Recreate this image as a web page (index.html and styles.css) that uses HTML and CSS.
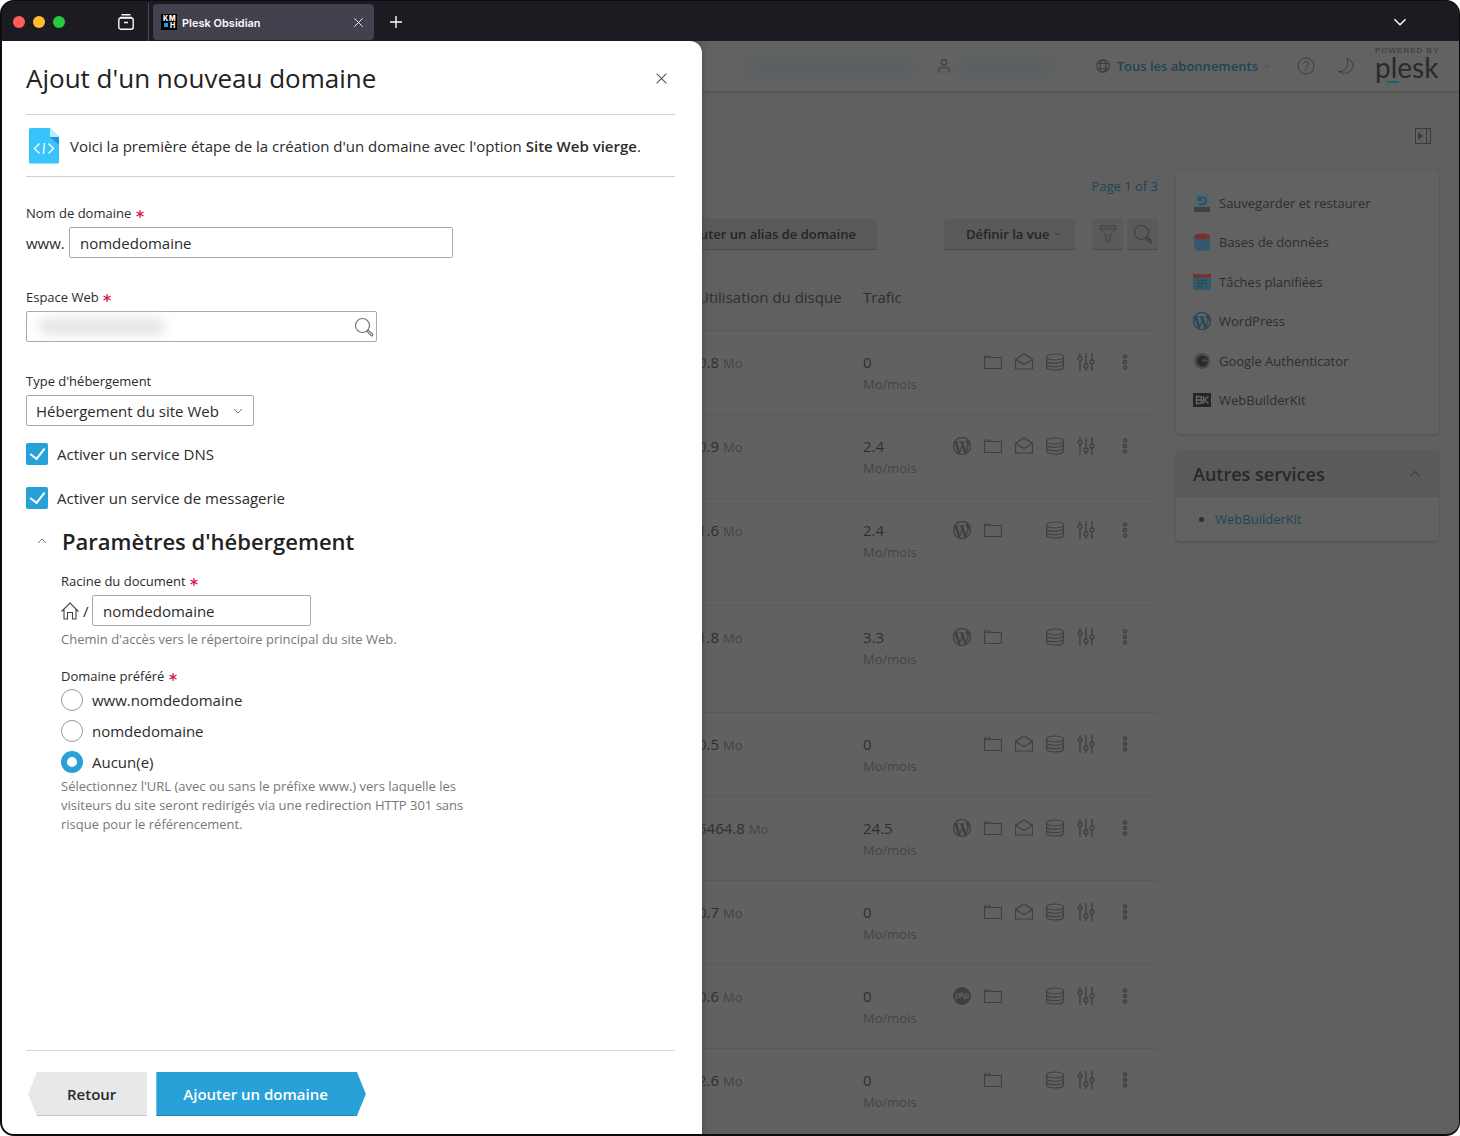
FILE: index.html
```html
<!DOCTYPE html>
<html lang="fr">
<head>
<meta charset="utf-8">
<meta name="viewport" content="width=device-width, initial-scale=1">
<title>Plesk Obsidian</title>
<link rel="stylesheet" href="styles.css">
</head>
<body>
<svg class="sprite" aria-hidden="true">
  <symbol id="i-req" viewBox="0 0 8 8"><path d="M4 0v8M.5 2l7 4M7.500 2l-7 4" stroke="currentColor" stroke-width="1.200" fill="none"/></symbol>
  <symbol id="i-x" viewBox="0 0 12 12"><path d="M1.500 1.500l9 9M10.500 1.500l-9 9" stroke="currentColor" fill="none"/></symbol>
  <symbol id="i-down" viewBox="0 0 10 10"><path d="M1 3l4 4 4-4" stroke="currentColor" fill="none"/></symbol>
  <symbol id="i-up" viewBox="0 0 10 10"><path d="M1 7l4-4 4 4" stroke="currentColor" fill="none"/></symbol>
  <symbol id="i-search" viewBox="0 0 20 20"><circle cx="8.500" cy="8.500" r="7" stroke="currentColor" stroke-width="1.200" fill="none"/><path d="M13 14.200l1.200-1.200 4.300 4c1 1-.6 2.400-1.500 1.500z" stroke="currentColor" stroke-width="1.200" fill="none"/></symbol>
  <symbol id="i-folder" viewBox="0 0 18 18"><path d="M.5 15.500v-12.500h5l1.500 1.500h10.500v11zM.5 4.500H7" stroke="currentColor" stroke-width="1.200" fill="none"/></symbol>
  <symbol id="i-mail" viewBox="0 0 18 18"><path d="M.5 6.500L9 .8l8.500 5.700v9.500H.5zM.5 6.500L9 11.500l8.500-5" stroke="currentColor" stroke-width="1.200" fill="none"/></symbol>
  <symbol id="i-db" viewBox="0 0 18 18"><path d="M.5 4c0-4 17-4 17 0v10c0 4-17 4-17 0zM.5 4c0 4 17 4 17 0M.5 7.300c0 4 17 4 17 0M.5 10.700c0 4 17 4 17 0" stroke="currentColor" stroke-width="1.200" fill="none"/></symbol>
  <symbol id="i-sliders" viewBox="0 0 18 18"><path d="M3 0v3.500M3 7.500V18M9 0v11M9 15v3M15 0v7M15 11v7" stroke="currentColor" stroke-width="1.400" fill="none"/><g stroke="currentColor" stroke-width="1.300" fill="none"><circle cx="3" cy="5.500" r="2"/><circle cx="9" cy="13" r="2"/><circle cx="15" cy="9" r="2"/></g></symbol>
  <symbol id="i-dots" viewBox="0 0 6 18"><g stroke="currentColor" stroke-width="1.500" fill="none"><circle cx="3" cy="3.500" r="1.600"/><circle cx="3" cy="9" r="1.600"/><circle cx="3" cy="14.500" r="1.600"/></g></symbol>
  <symbol id="i-wp" viewBox="0 0 24 24"><path fill="currentColor" stroke="currentColor" stroke-width=".6" d="M21.469 6.825c.84 1.537 1.318 3.3 1.318 5.175 0 3.979-2.156 7.456-5.363 9.325l3.295-9.527c.615-1.54.82-2.771.82-3.864 0-.405-.026-.78-.07-1.11m-7.981.105c.647-.03 1.232-.105 1.232-.105.582-.075.514-.93-.067-.899 0 0-1.755.135-2.88.135-1.064 0-2.85-.15-2.85-.15-.585-.03-.661.855-.075.885 0 0 .54.061 1.125.09l1.68 4.605-2.37 7.08L5.354 6.9c.649-.03 1.234-.1 1.234-.1.585-.075.516-.93-.065-.896 0 0-1.746.138-2.874.138-.2 0-.438-.008-.69-.015C4.911 3.15 8.235 1.215 12 1.215c2.809 0 5.365 1.072 7.286 2.833-.046-.003-.091-.009-.141-.009-1.06 0-1.812.923-1.812 1.914 0 .89.513 1.643 1.06 2.531.411.72.89 1.643.89 2.977 0 .915-.354 1.994-.821 3.479l-1.075 3.585-3.9-11.61.001.014zM12 22.784c-1.059 0-2.081-.153-3.048-.437l3.237-9.406 3.315 9.087c.024.053.05.101.078.149-1.12.393-2.325.609-3.582.609M1.211 12c0-1.564.336-3.05.935-4.39L7.29 21.709C3.694 19.96 1.212 16.271 1.211 12M12 0C5.385 0 0 5.385 0 12s5.385 12 12 12 12-5.385 12-12S18.615 0 12 0"/></symbol>
  <symbol id="i-php" viewBox="0 0 18 18"><circle cx="9" cy="9" r="9" fill="currentColor"/><path d="M2.500 12.500l1-5.500h1.800c2 0 1.500 3.500-.6 3.500H3M7.500 10.500l1-5.500M8.200 7.500c2-.8 2.700-.3 2.300 1l-.4 2M11.700 12.500l1-5.500h1.600c2 0 1.500 3.500-.6 3.500h-1.500" stroke="#616161" stroke-width="1.200" fill="none"/></symbol>
</svg>

<div class="window">
  <div class="titlebar">
    <div class="lights"><span class="light red"></span><span class="light amber"></span><span class="light green"></span></div>
    <button class="bar-btn archive" aria-label="Archives"><svg width="16" height="16" viewBox="0 0 16 16" fill="none" stroke="currentColor" stroke-width="1.400"><path d="M3.500.8h9"/><rect x=".8" y="4" width="14.400" height="11.200" rx="2"/><path d="M2 3.500h12M6 8.500h4"/></svg></button>
    <div class="tab">
      <svg class="favicon" width="16" height="16" viewBox="0 0 16 16"><rect width="16" height="16" fill="#000"/><rect x="3" y="9" width="4" height="4" fill="#0aa5ec"/><text x="2" y="7" class="fav-text">K</text><text x="8" y="7" class="fav-text">M</text><text x="9" y="14" class="fav-text">H</text></svg>
      <span class="tab-title">Plesk Obsidian</span>
      <button class="bar-btn" aria-label="Fermer l'onglet"><svg width="11" height="11"><use href="#i-x"/></svg></button>
    </div>
    <button class="bar-btn plus" aria-label="Nouvel onglet"><svg width="12" height="12" viewBox="0 0 12 12" stroke="currentColor" stroke-width="1.400"><path d="M6 0v12M0 6h12"/></svg></button>
    <button class="bar-btn tabs-list" aria-label="Onglets"><svg width="14" height="14" viewBox="0 0 10 10"><use href="#i-down"/></svg></button>
  </div>

  <div class="viewport">
    <div class="page">
      <header class="topbar">
        <span class="smudge smudge-wide"></span>
        <svg class="user" width="12" height="14" viewBox="0 0 12 14" fill="none" stroke="currentColor" stroke-width="1.200"><circle cx="6" cy="3.500" r="2.800"/><path d="M1 14v-3.500c0-3 10-3 10 0V14"/></svg>
        <span class="smudge smudge-short"></span>
        <svg class="globe" width="14" height="14" viewBox="0 0 14 14" fill="none" stroke="currentColor" stroke-width="1.200"><circle cx="7" cy="7" r="6.200"/><ellipse cx="7" cy="7" rx="3" ry="6.200"/><path d="M1.500 4.500h11M1.500 9.500h11"/></svg>
        <a class="subs" href="#">Tous les abonnements</a>
        <svg class="caret" width="6" height="6" viewBox="0 0 10 10"><use href="#i-down"/></svg>
        <svg class="help" width="18" height="18" viewBox="0 0 18 18" fill="none" stroke="currentColor"><circle cx="9" cy="9" r="8"/><path d="M6.500 7c0-3.300 5-3.300 5-.3 0 1.800-2.500 1.800-2.500 4M9 12.300v1.400"/></svg>
        <svg class="moon" width="18" height="18" viewBox="0 0 18 18" fill="none" stroke="currentColor"><path d="M10 1.500c6 2 8 8 3.500 12.500-3.500 3-8.500 3-12 .5 6 1 11-5 8.500-13z"/></svg>
        <a class="logo" href="#"><span class="powered">POWERED BY</span><span class="plesk">plesk</span></a>
      </header>

      <div class="pagebar"><button class="icon-btn" aria-label="Masquer le panneau"><svg width="16" height="16" viewBox="0 0 16 16" fill="none" stroke="currentColor"><rect x=".5" y=".5" width="15" height="15"/><path d="M11.500.5v15"/><path d="M3.500 5v6l4-3z" fill="currentColor"/></svg></button></div>

      <div class="columns">
        <main class="main">
          <a class="pager" href="#">Page 1 of 3</a>
          <div class="toolbar">
            <button class="tool alias">Ajouter un alias de domaine</button>
            <button class="tool view">Définir la vue <svg width="6" height="6" viewBox="0 0 10 10"><use href="#i-down"/></svg></button>
            <button class="tool square filter" aria-label="Filtrer"><svg width="18" height="18" viewBox="0 0 18 18" fill="none" stroke="currentColor"><path d="M1 1h16v3l-6 6v6l-4 1.500V10L1 4zM1 4h16"/></svg></button>
            <button class="tool square" aria-label="Rechercher"><svg width="20" height="20"><use href="#i-search"/></svg></button>
          </div>
          <table class="domains">
            <colgroup><col><col class="c-disk"><col class="c-traffic"><col class="c-acts"></colgroup>
            <thead><tr><td></td><th scope="col">Utilisation du disque</th><th scope="col">Trafic</th><td></td></tr></thead>
            <tbody>
              <tr><td></td><td>0.8 <small>Mo</small></td><td>0<small class="unit">Mo/mois</small></td><td><div class="acts"><i></i><svg><use href="#i-folder"/></svg><svg><use href="#i-mail"/></svg><svg><use href="#i-db"/></svg><svg><use href="#i-sliders"/></svg><svg class="dots"><use href="#i-dots"/></svg></div></td></tr>
              <tr><td></td><td>0.9 <small>Mo</small></td><td>2.4<small class="unit">Mo/mois</small></td><td><div class="acts"><svg><use href="#i-wp"/></svg><svg><use href="#i-folder"/></svg><svg><use href="#i-mail"/></svg><svg><use href="#i-db"/></svg><svg><use href="#i-sliders"/></svg><svg class="dots"><use href="#i-dots"/></svg></div></td></tr>
              <tr class="tall"><td></td><td>1.6 <small>Mo</small></td><td>2.4<small class="unit">Mo/mois</small></td><td><div class="acts"><svg><use href="#i-wp"/></svg><svg><use href="#i-folder"/></svg><i></i><svg><use href="#i-db"/></svg><svg><use href="#i-sliders"/></svg><svg class="dots"><use href="#i-dots"/></svg></div></td></tr>
              <tr class="tall"><td></td><td>1.8 <small>Mo</small></td><td>3.3<small class="unit">Mo/mois</small></td><td><div class="acts"><svg><use href="#i-wp"/></svg><svg><use href="#i-folder"/></svg><i></i><svg><use href="#i-db"/></svg><svg><use href="#i-sliders"/></svg><svg class="dots"><use href="#i-dots"/></svg></div></td></tr>
              <tr><td></td><td>0.5 <small>Mo</small></td><td>0<small class="unit">Mo/mois</small></td><td><div class="acts"><i></i><svg><use href="#i-folder"/></svg><svg><use href="#i-mail"/></svg><svg><use href="#i-db"/></svg><svg><use href="#i-sliders"/></svg><svg class="dots"><use href="#i-dots"/></svg></div></td></tr>
              <tr><td></td><td>5464.8 <small>Mo</small></td><td>24.5<small class="unit">Mo/mois</small></td><td><div class="acts"><svg><use href="#i-wp"/></svg><svg><use href="#i-folder"/></svg><svg><use href="#i-mail"/></svg><svg><use href="#i-db"/></svg><svg><use href="#i-sliders"/></svg><svg class="dots"><use href="#i-dots"/></svg></div></td></tr>
              <tr><td></td><td>0.7 <small>Mo</small></td><td>0<small class="unit">Mo/mois</small></td><td><div class="acts"><i></i><svg><use href="#i-folder"/></svg><svg><use href="#i-mail"/></svg><svg><use href="#i-db"/></svg><svg><use href="#i-sliders"/></svg><svg class="dots"><use href="#i-dots"/></svg></div></td></tr>
              <tr><td></td><td>0.6 <small>Mo</small></td><td>0<small class="unit">Mo/mois</small></td><td><div class="acts"><svg><use href="#i-php"/></svg><svg><use href="#i-folder"/></svg><i></i><svg><use href="#i-db"/></svg><svg><use href="#i-sliders"/></svg><svg class="dots"><use href="#i-dots"/></svg></div></td></tr>
              <tr><td></td><td>2.6 <small>Mo</small></td><td>0<small class="unit">Mo/mois</small></td><td><div class="acts"><i></i><svg><use href="#i-folder"/></svg><i></i><svg><use href="#i-db"/></svg><svg><use href="#i-sliders"/></svg><svg class="dots"><use href="#i-dots"/></svg></div></td></tr>
            </tbody>
          </table>
        </main>

        <aside class="side">
          <ul class="card tools">
            <li><svg viewBox="0 0 18 18"><path d="M2 0h14v13H2z" fill="#4d6470"/><path d="M5.500 5.500C8 2 13 3 13 6.500S9 11 6 9.500M5.500 2.500v3.500H9" fill="none" stroke="#2a4b5c" stroke-width="1.500"/><path d="M1 13h16v5H1z" fill="#3e4143"/></svg><a href="#">Sauvegarder et restaurer</a></li>
            <li><svg viewBox="0 0 18 18"><path d="M1 4v11c0 4 16 4 16 0V4z" fill="#34596a"/><ellipse cx="9" cy="3.500" rx="8" ry="3" fill="#7a2f2c"/></svg><a href="#">Bases de données</a></li>
            <li><svg viewBox="0 0 18 18"><path d="M0 4h18v13H0z" fill="#34596a"/><path d="M0 1h18v3.500H0z" fill="#7a2f2c"/><path d="M4 0v2M9 0v2M14 0v2" stroke="#606060"/><path d="M4 7.500h10M4 10.500h10M4 13.500h6M5.500 7v7M9 7v7M12.500 7v4" stroke="#294957" stroke-width=".8" fill="none"/></svg><a href="#">Tâches planifiées</a></li>
            <li class="wp"><svg><use href="#i-wp"/></svg><a href="#">WordPress</a></li>
            <li><svg viewBox="0 0 18 18"><circle cx="9" cy="9" r="8" fill="#4b4b4b"/><circle cx="9.500" cy="9" r="5.500" fill="#2a2a2a"/><path d="M9 9h6M10 9l2.500-2.500" stroke="#484848" stroke-width="1.500"/></svg><a href="#">Google Authenticator</a></li>
            <li><svg viewBox="0 0 18 18"><path d="M0 2h18v14H0z" fill="#252525"/><path d="M3.500 5.500h3c2.500 0 2.500 3.300 0 3.500 3 .2 3 3.500 0 3.500h-3zM3.500 9h3M10.500 5v8M15.500 5.500L11.500 9l4 3.500" stroke="#666" stroke-width="1.500" fill="none"/></svg><a href="#">WebBuilderKit</a></li>
          </ul>
          <section class="card services">
            <h2>Autres services <svg width="12" height="12" viewBox="0 0 10 10"><use href="#i-up"/></svg></h2>
            <ul><li><a href="#">WebBuilderKit</a></li></ul>
          </section>
        </aside>
      </div>
    </div>

    <form class="drawer">
      <div class="drawer-head"><h1>Ajout d'un nouveau domaine</h1><button type="button" class="close" aria-label="Fermer"><svg width="13" height="13"><use href="#i-x"/></svg></button></div>
      <div class="banner">
        <svg width="30" height="36" viewBox="0 0 30 36"><path d="M1.500 0H21l9 9v25.500a1 1 0 0 1-1 1H1a1 1 0 0 1-1-1V1.500A1.500 1.500 0 0 1 1.500 0z" fill="#38c3fb"/><path d="M21 0l9 9h-9z" fill="#bfeafd"/><path d="M21 9h9v8z" fill="#1a96dc"/><path d="M10.500 15.500L5.500 20.500l5 5M19.500 15.500l5 5-5 5M15.500 15l-1 11" stroke="#e8f8ff" stroke-width="1.600" fill="none"/></svg>
        <p>Voici la première étape de la création d'un domaine avec l'option <strong>Site Web vierge</strong>.</p>
      </div>
      <div class="fields">
        <div class="field">
          <label for="domain">Nom de domaine <svg class="req"><use href="#i-req"/></svg></label>
          <div class="row"><span class="www">www.</span><input id="domain" class="box domain" type="text" value="nomdedomaine"></div>
        </div>
        <div class="field">
          <label for="space">Espace Web <svg class="req"><use href="#i-req"/></svg></label>
          <div class="lookup"><input id="space" class="box" type="text"><span class="masked"></span><svg class="glass" width="20" height="20"><use href="#i-search"/></svg></div>
        </div>
        <div class="field hosting">
          <label for="type">Type d'hébergement</label>
          <div class="select"><select id="type" class="box"><option>Hébergement du site Web</option></select><svg width="10" height="10"><use href="#i-down"/></svg></div>
        </div>
        <label class="check"><input type="checkbox" checked>Activer un service DNS</label>
        <label class="check"><input type="checkbox" checked>Activer un service de messagerie</label>
        <section class="params">
          <h2><svg width="10" height="10"><use href="#i-up"/></svg>Paramètres d'hébergement</h2>
          <div class="params-body">
            <label class="lab" for="root">Racine du document <svg class="req"><use href="#i-req"/></svg></label>
            <div class="row"><svg width="18" height="18" viewBox="0 0 18 18" fill="none" stroke="#444" stroke-width="1.100"><path d="M.5 9.500L9 1l8.500 8.500M3 7.500v9.500h3.500v-6.500h5V17H15V7.500"/></svg><span class="slash">/</span><input id="root" class="box root" type="text" value="nomdedomaine"></div>
            <p class="hint">Chemin d'accès vers le répertoire principal du site Web.</p>
            <fieldset>
              <legend>Domaine préféré <svg class="req"><use href="#i-req"/></svg></legend>
              <label class="radio"><input type="radio" name="pref">www.nomdedomaine</label>
              <label class="radio"><input type="radio" name="pref">nomdedomaine</label>
              <label class="radio"><input type="radio" name="pref" checked>Aucun(e)</label>
            </fieldset>
            <p class="hint">Sélectionnez l'URL (avec ou sans le préfixe www.) vers laquelle les visiteurs du site seront redirigés via une redirection HTTP 301 sans risque pour le référencement.</p>
          </div>
        </section>
      </div>
      <div class="drawer-foot"><button type="button" class="act back">Retour</button><button type="submit" class="act submit">Ajouter un domaine</button></div>
    </form>
  </div>
</div>
</body>
</html>
```

FILE: styles.css
```css
* { box-sizing: border-box; }
body { margin: 0; background: #fff; color: #2b2b2b; font: 15px/20px "Open Sans", sans-serif; }
h1, h2, p, ul, fieldset { margin: 0; padding: 0; border: 0; }
button { border: 0; padding: 0; background: none; color: inherit; font: inherit; }
a { color: inherit; text-decoration: none; }
svg { flex: none; }
.sprite { position: absolute; width: 0; height: 0; }

.window { display: flex; flex-direction: column; height: 100vh; border: solid #0c0c0f; border-width: 1px 1px 2px 2px; border-radius: 14px; background: #1c1b22; overflow: hidden; }

/* browser bar */
.titlebar { display: flex; align-items: center; height: 40px; flex: none; padding-left: 11px; padding-top: 2px; background: #1c1b22; color: #fbfbfe; }
.lights { display: flex; gap: 8px; }
.light { width: 12px; height: 12px; border-radius: 50%; }
.red { background: #ff5f57; }
.amber { background: #febc2e; }
.green { background: #28c840; }
.bar-btn { display: flex; }
.archive { margin-left: 53px; padding-right: 14px; border-right: 1px solid #4a4954; height: 38px; align-items: center; }
.tab { display: flex; align-items: center; width: 221px; height: 36px; margin-left: 4px; padding: 0 10px 0 8px; border-radius: 4px; background: #42414d; }
.fav-text { font: 800 7px Inter, sans-serif; fill: #fff; }
.tab-title { flex: 1; margin-left: 5px; padding-top: 2px; font: 600 11px/16px Inter, sans-serif; }
.plus { margin-left: 16px; }
.tabs-list { margin-left: auto; margin-right: 52px; }

.viewport { position: relative; flex: 1; min-height: 0; overflow: hidden; }

/* dimmed page behind the drawer */
.page { min-height: 100%; background: #606060; color: #2f2f2f; }
.topbar { display: flex; align-items: center; justify-content: flex-end; height: 52px; padding-right: 20px; border-bottom: 2px solid #555; background: #626262; color: #3d3d3d; }
.smudge { height: 18px; background: #586063; filter: blur(5px); opacity: .7; }
.smudge-wide { width: 165px; }
.smudge-short { width: 92px; }
.user { margin: 0 10px 0 26px; }
.globe { margin: 0 7px 0 44px; }
.subs { color: #1d4453; font-weight: 600; font-size: 13px; }
.caret { margin-left: 6px; }
.help { margin-left: 27px; }
.moon { margin: 0 20px 0 22px; }
.logo { display: flex; flex-direction: column; width: 64px; height: 38px; color: #2a2a2a; }
.powered { font: 8px/8px "Liberation Sans", sans-serif; letter-spacing: 1px; white-space: nowrap; color: #383838; }
.plesk { height: 28px; background: linear-gradient(#1d6072, #1d6072) 12px 100% / 12px 2px no-repeat; font: 28px/24px Lato, sans-serif; }
.pagebar { display: flex; justify-content: flex-end; align-items: center; height: 78px; padding: 8px 28px 0 0; color: #3a3a3a; }
.icon-btn { display: flex; }
.columns { display: flex; gap: 18px; padding: 0 20px 0 24px; }
.main { flex: 1; min-width: 0; padding-top: 5px; }
.pager { display: block; text-align: right; font-size: 13px; color: #1c4658; }
.toolbar { display: flex; justify-content: flex-end; margin-top: 23px; }
.tool { display: flex; align-items: center; height: 31px; border-radius: 2px; background: #5a5a5a; border-bottom: 1px solid #4a4a4a; font-weight: 600; font-size: 13px; color: #242424; }
.alias { padding: 0 21px; }
.view { width: 131px; margin: 0 17px 0 67px; padding-left: 22px; gap: 6px; }
.square { width: 31px; justify-content: center; color: #404040; }
.filter { margin-right: 4px; }
.domains { width: 100%; margin-top: 32px; table-layout: fixed; border-collapse: collapse; }
.c-disk { width: 165px; }
.c-traffic { width: 90px; }
.c-acts { width: 205px; }
.domains th, .domains td { padding: 0; text-align: left; vertical-align: top; font-weight: 400; border-bottom: 1px solid #5a5a5a; white-space: nowrap; }
.domains thead tr { height: 48px; }
.domains thead th { padding-top: 5px; }
.domains tbody tr { height: 84px; background: #616161; }
.domains tbody tr.tall { height: 107px; }
.domains tbody td { padding-top: 21px; }
.domains small { font-size: 13px; color: #444; }
.unit { display: block; line-height: 24px; }
.acts { display: grid; grid-template-columns: repeat(5, 18px) 6px; column-gap: 13px; color: #404040; height: 20px; align-items: center; }
.acts svg { width: 18px; height: 18px; }
.acts .dots { width: 6px; margin-left: 14px; }

.side { width: 263px; flex: none; font-size: 13px; }
.card { border-radius: 4px; background: #626262; box-shadow: 0 1px 3px #505050; }
.tools { display: flex; flex-direction: column; justify-content: space-between; height: 263px; padding: 22px 17px 24px; list-style: none; color: #2e2e2e; }
.tools li { display: flex; align-items: center; gap: 8px; }
.tools svg { width: 18px; height: 18px; }
.wp svg { color: #23495a; }
.services { margin-top: 17px; overflow: hidden; }
.services h2 { display: flex; align-items: center; justify-content: space-between; height: 46px; padding: 0 18px 0 17px; background: #5a5a5a; font-size: 18px; font-weight: 600; color: #282828; }
.services h2 svg { color: #404040; }
.services ul { padding: 12px 17px 12px 39px; }
.services a { color: #1c4658; }

/* drawer */
.drawer { position: absolute; inset: 0 auto 0 0; width: 700px; max-width: 100%; display: flex; flex-direction: column; padding: 0 27px 0 24px; background: #fff; border-top-right-radius: 12px; box-shadow: 0 0 6px #444; }
.drawer-head { display: flex; align-items: center; justify-content: space-between; height: 74px; padding: 1px 7px 0 0; border-bottom: 1px solid #cfcfd8; }
.drawer-head h1 { font-size: 26px; font-weight: 400; line-height: 36px; color: #222; }
.close { display: flex; color: #555; }
.banner { display: flex; align-items: center; gap: 11px; height: 62px; padding-left: 3px; border-bottom: 1px solid #cfcfd8; }
strong { font-weight: 600; }
.fields { flex: 1; padding-top: 26px; }
.field { height: 84px; }
.field > label, .lab, legend { display: block; height: 24px; padding: 0; font-size: 13px; line-height: 20px; }
.req { width: 8px; height: 8px; margin-left: 1px; color: #d0143c; }
.row { display: flex; align-items: center; }
.www { width: 43px; }
.box { display: block; height: 31px; margin: 0; border: 1px solid #a9a9a9; border-radius: 2px; background: #fff; padding: 0 10px; color: #2b2b2b; font: 15px/20px "Open Sans", sans-serif; }
.domain { width: 384px; }
.lookup { position: relative; width: 351px; }
.lookup .box { width: 100%; }
.masked { position: absolute; left: 14px; top: 8px; width: 124px; height: 15px; background: #e2e2e2; filter: blur(6px); }
.glass { position: absolute; right: 3px; top: 6px; color: #777; }
.hosting { height: 72px; }
.select { position: relative; width: 228px; }
.select .box { width: 100%; appearance: none; padding: 0 9px; }
.select svg { position: absolute; right: 11px; top: 11px; color: #777; }
.check { display: flex; align-items: center; gap: 9px; height: 22px; margin-top: 22px; }
.field + .check { margin-top: 0; }
.check input, .radio input { appearance: none; width: 22px; height: 22px; margin: 0; display: grid; place-items: center; }
.check input { border-radius: 2px; background: #28a0d8; }
.check input::before { content: ""; width: 7px; height: 12px; margin-bottom: 4px; border: solid #fff; border-width: 0 2px 2px 0; transform: rotate(38deg); }
.params { margin-top: 17px; }
.params h2 { display: flex; align-items: center; gap: 15px; height: 30px; padding-left: 11px; font-size: 22px; font-weight: 600; color: #222; }
.params h2 svg { color: #777; }
.params-body { padding: 15px 0 0 35px; }
.slash { width: 13px; padding-left: 4px; }
.root { width: 219px; }
.hint { max-width: 420px; margin-top: 4px; font-size: 13px; line-height: 19px; color: #777; }
fieldset { margin-top: 17px; }
legend { height: 23px; }
.radio { display: flex; align-items: center; gap: 9px; height: 22px; margin-bottom: 9px; }
.radio:last-child { margin-bottom: 0; }
.radio input { border: 1px solid #999; border-radius: 50%; background: #fff; }
.radio input:checked { border: 6px solid #28a0d8; }
.drawer-foot { display: flex; gap: 9px; height: 84px; padding: 21px 2px 0; border-top: 1px solid #d8d8e0; }
.act { height: 44px; font-weight: 600; }
.back { padding: 0 31px 0 39px; background: #e8e8e8; box-shadow: inset 0 -1px #c4c4c4; clip-path: polygon(9px 0, 100% 0, 100% 100%, 9px 100%, 0 50%); }
.submit { padding: 0 38px 0 27px; background: #28a0d8; box-shadow: inset 0 -1px #1f88ba; color: #fff; clip-path: polygon(0 0, calc(100% - 9px) 0, 100% 50%, calc(100% - 9px) 100%, 0 100%); }
```
